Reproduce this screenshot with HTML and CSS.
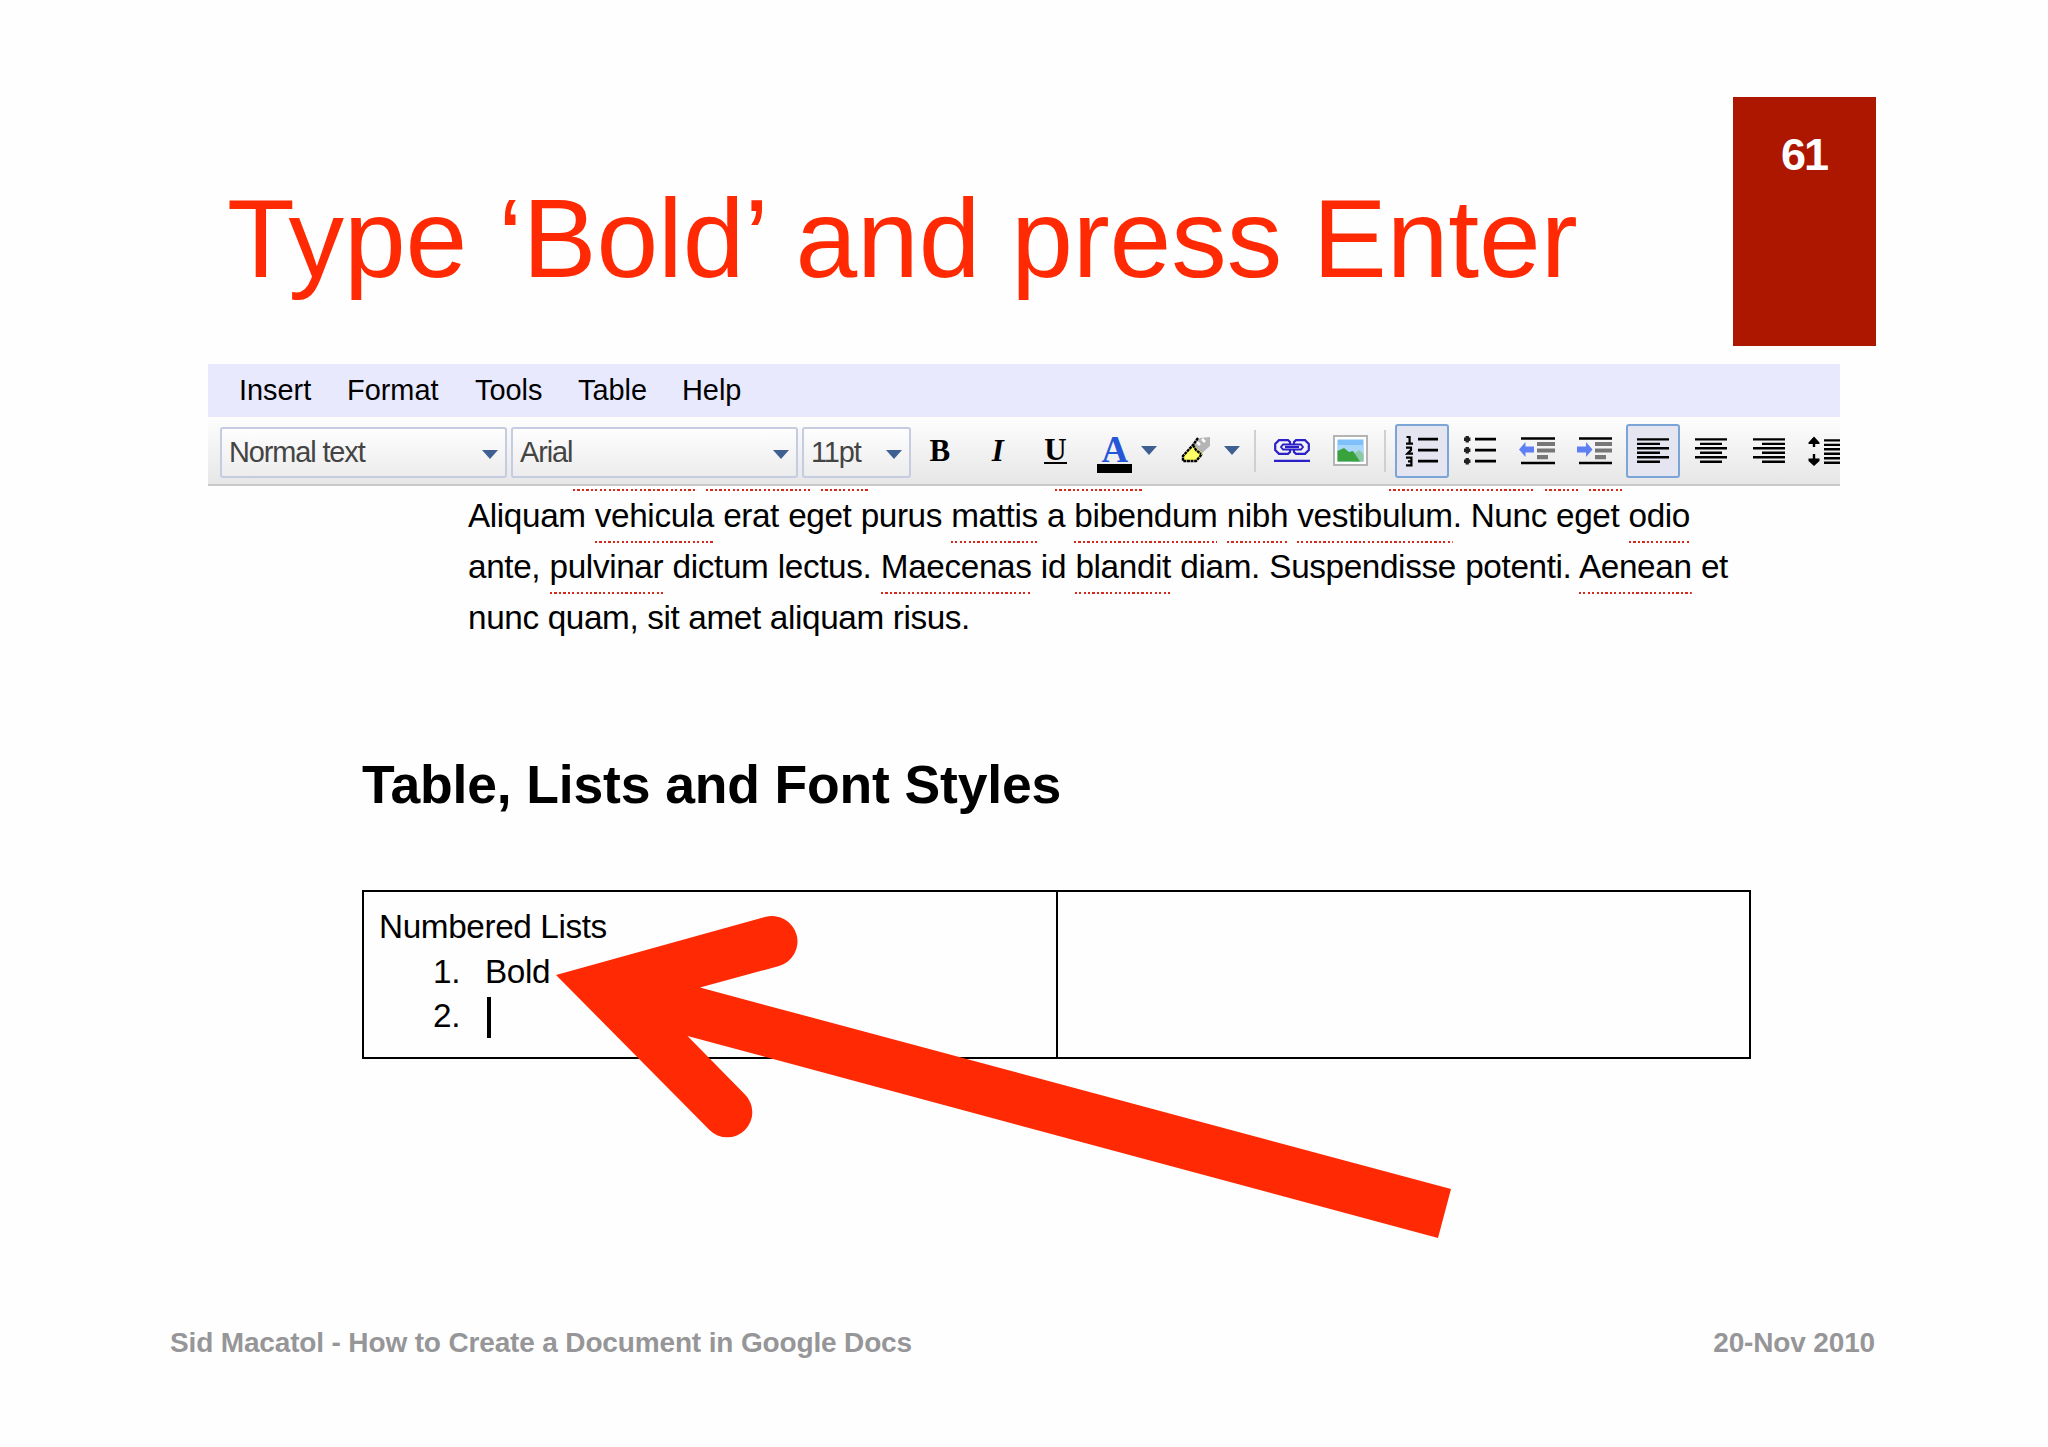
FILE: index.html
```
<!DOCTYPE html>
<html lang="en">
  <head>
    <meta charset="UTF-8" />
    <meta name="viewport" content="width=device-width, initial-scale=1.0" />
    <title>How to Create a Document in Google Docs</title>
    <link rel="stylesheet" href="styles.css">
  </head>

  <body>
    <div class="slide">
      <header class="header">
        <h1>Type ‘Bold’ and press Enter</h1>
        <div class="page-number">61</div>
      </header>

      <div class="editor">
        <nav class="menu">
          <span class="insert">Insert</span>
          <span class="format">Format</span>
          <span class="tools">Tools</span>
          <span class="table">Table</span>
          <span class="help">Help</span>
        </nav>

        <div class="toolbar">
          <div class="select"><span>Normal text</span><i class="caret"></i></div>
          <div class="select"><span>Arial</span><i class="caret"></i></div>
          <div class="select size"><span>11pt</span><i class="caret"></i></div>

          <div class="tool letter">B</div>
          <div class="tool letter italic">I</div>
          <div class="tool letter underline"><span>U</span></div>
          <div class="tool color"><span>A</span><i class="caret"></i></div>
          <div class="tool marker">
            <svg width="30" height="27" viewBox="0 0 30 27">
              <path d="M12 7 L19 1 L29 0 L29 9 L20 17 Z" fill="#b5b5b5" />
              <path d="M16 5 l3 3 M21 2 l3 3" stroke="#fff" stroke-width="2.5" />
              <path d="M2 20 L12 8 L22 17 L16 24 L3 24 Z" fill="#ffff66" />
              <path d="M17 1 L12 8 L2 19 L2 24 L15 24 L21 17 M12 8 l3 5 l5 4" fill="none" stroke="#000" stroke-width="2.4" stroke-dasharray="3 .6" />
            </svg>
            <i class="caret"></i>
          </div>
          <i class="line"></i>
          <div class="tool">
            <svg width="36" height="24" viewBox="0 0 36 24" fill="none" stroke="#2b20c8" stroke-width="2.2">
              <path d="M16 5 V3 L14 1.2 H5 L1.2 5 V11 L5 14.8 H14 L16 13 V11" />
              <path d="M20 5 V3 L22 1.2 H31 L34.8 5 V11 L31 14.8 H22 L20 13 V11" />
              <path d="M9 5.5 H27 L29 8 L27 10.5 H9 L7 8 Z M11 8 H25" stroke-width="1.8" />
              <path d="M0 21.8 H36" />
            </svg>
          </div>
          <div class="tool">
            <svg width="35" height="31" viewBox="0 0 35 31">
              <rect x="1" y="1" width="33" height="29" fill="#fff" stroke="#b4b4b4" stroke-width="2" />
              <rect x="4.5" y="4.5" width="26" height="22" fill="#7fc0fa" />
              <rect x="4.5" y="10" width="26" height="9" fill="#a9d6fb" />
              <path d="M18 26 L22 18 L26 15 L30.5 19 V26.5 H18 Z" fill="#8cc9a4" />
              <path d="M4.5 16 L11 13 L16 17 L20 16 L27 26.5 H4.5 Z" fill="#3aa23c" />
            </svg>
          </div>
          <i class="line second-line"></i>
          <div class="tool active">
            <svg width="34" height="32" viewBox="0 0 34 32">
              <path d="M13 4.2 H33 M13 15.2 H33 M13 26.2 H33" stroke="#000" stroke-width="2.8" />
              <path d="M1.5 2 H4.6 V8.6 M1 8.6 H8 M1 12.6 H6 V15 L2.4 18.6 H8 M1 22.6 H6.4 V30.4 H1 M3 26.4 H6" fill="none" stroke="#000" stroke-width="2.2" />
            </svg>
          </div>
          <div class="tool">
            <svg width="32" height="32" viewBox="0 0 32 32">
              <path d="M11 4.2 H32 M11 15.2 H32 M11 26.2 H32" stroke="#000" stroke-width="2.8" />
              <path d="M3.2 1 V7.4 M0 4.2 H6.4 M3.2 12 V18.4 M0 15.2 H6.4 M3.2 23 V29.4 M0 26.2 H6.4" stroke="#222" stroke-width="3.4" />
            </svg>
          </div>
          <div class="tool">
            <svg width="36" height="30" viewBox="0 0 36 30">
              <path d="M2 2.5 H36 M2 27 H36" stroke="#000" stroke-width="2.6" />
              <path d="M18 8 H36 M18 14.5 H36 M18 21.2 H29" stroke="#777" stroke-width="4.2" />
              <path d="M0 13.5 L6.5 6 V10.5 H15 V16.5 H6.5 V21 Z" fill="#5f7ff5" />
            </svg>
          </div>
          <div class="tool">
            <svg width="36" height="30" viewBox="0 0 36 30">
              <path d="M2 2.5 H35 M2 27 H35" stroke="#000" stroke-width="2.6" />
              <path d="M18 8 H35 M18 14.5 H35 M18 21.2 H29" stroke="#777" stroke-width="4.2" />
              <path d="M15.5 13.5 L9 6 V10.5 H0 V16.5 H9 V21 Z" fill="#5f7ff5" />
            </svg>
          </div>
          <div class="tool active">
            <svg width="32" height="28" viewBox="0 0 32 28">
              <path d="M0 2.4 H32 M0 6.9 H23 M0 11.3 H32 M0 15.8 H23 M0 20.3 H32 M0 24.8 H23" stroke="#000" stroke-width="2.4" />
            </svg>
          </div>
          <div class="tool">
            <svg width="32" height="28" viewBox="0 0 32 28">
              <path d="M0 2.4 H32 M5 6.9 H27 M0 11.3 H32 M5 15.8 H27 M0 20.3 H32 M5 24.8 H27" stroke="#000" stroke-width="2.4" />
            </svg>
          </div>
          <div class="tool">
            <svg width="32" height="28" viewBox="0 0 32 28">
              <path d="M0 2.4 H32 M9 6.9 H32 M0 11.3 H32 M9 15.8 H32 M0 20.3 H32 M9 24.8 H32" stroke="#000" stroke-width="2.4" />
            </svg>
          </div>
          <div class="tool spacing">
            <svg width="32" height="30" viewBox="0 0 32 30">
              <path d="M16 4.4 H32 M16 8.9 H32 M16 13.3 H32 M16 17.8 H32 M16 22.3 H32 M16 26.8 H32" stroke="#000" stroke-width="2.4" />
              <path d="M6 2 V11 M6 18 V28" stroke="#000" stroke-width="2.4" />
              <path d="M6 0.5 L11.5 6.5 V8 H0.5 V6.5 Z M6 30 L11.5 25 V22.5 H0.5 V25 Z" />
            </svg>
          </div>
        </div>

        <!-- squiggles of the line scrolled under the toolbar -->
        <div class="cut-line">
          <i style="width: 122px"></i>
          <i style="width: 105px; margin-left: 11px"></i>
          <i style="width: 48px; margin-left: 10px"></i>
          <i style="width: 88px; margin-left: 186px"></i>
          <i style="width: 145px; margin-left: 246px"></i>
          <i style="width: 34px; margin-left: 11px"></i>
          <i style="width: 35px; margin-left: 10px"></i>
        </div>

        <div class="text">
          <p class="first">Aliquam <u>vehicula</u> erat eget purus <u>mattis</u> a <u>bibendum</u> <u>nibh</u> <u>vestibulum</u>. Nunc eget <u>odio</u></p>
          <p class="second">ante, <u>pulvinar</u> dictum lectus. <u>Maecenas</u> id <u>blandit</u> diam. Suspendisse potenti. <u>Aenean</u> et</p>
          <p class="third">nunc quam, sit amet aliquam risus.</p>
        </div>

        <h2>Table, Lists and Font Styles</h2>

        <div class="doc-table">
          <div class="cell">
            <p>Numbered Lists</p>
            <div class="row"><span class="num">1.</span><span>Bold</span></div>
            <div class="row"><span class="num">2.</span><i class="cursor"></i></div>
          </div>
          <div class="cell"></div>
        </div>
      </div>

      <footer class="footer">
        <span>Sid Macatol - How to Create a Document in Google Docs</span>
        <span>20-Nov 2010</span>
      </footer>

      <svg class="arrow" width="900" height="330" viewBox="554 912 900 330">
        <path d="M556 975 L765 917 A25 25 0 0 1 779 966 L700 987.5 L1451 1189 L1438 1238 L687.5 1036 L745 1094.5 A25 25 0 0 1 709.5 1130 Z" fill="#ff2a04" />
      </svg>
    </div>
  </body>
</html>
```

FILE: styles.css
```
* {
  box-sizing: border-box;
}

body {
  margin: 0;
  background: #fefefe;
  font-family: "Liberation Sans", Arial, sans-serif;
}

h1,
h2,
p {
  margin: 0;
  font-weight: normal;
}

.slide {
  position: relative;
  width: 2048px;
  height: 1447px;
  overflow: hidden;
  white-space: nowrap;
}

.header {
  display: flex;
  justify-content: space-between;
  height: 364px;
  padding: 97px 172px 0 227px;
}

.header h1 {
  padding-top: 78px;
  font-size: 111px;
  line-height: 128px;
  letter-spacing: -0.1px;
  color: #ff2a04;
}

.page-number {
  width: 143px;
  height: 249px;
  padding: 32px 0 0 48px;
  background: #ad1700;
  color: #fff;
  font-size: 45px;
  font-weight: bold;
  line-height: 52px;
  letter-spacing: -2px;
}

.editor {
  width: 1632px;
  margin-left: 208px;
}

.menu {
  display: flex;
  height: 53px;
  padding-left: 31px;
  background: #e8e9fc;
  font-size: 28.9px;
  line-height: 52px;
}

.menu span {
  width: 104px;
}

.menu .insert {
  width: 108px;
}

.menu .format {
  width: 128px;
}

.menu .tools {
  width: 103px;
}

.toolbar {
  display: flex;
  align-items: center;
  height: 69px;
  padding-left: 12px;
  background: linear-gradient(#fefefe, #e6e6e6);
  border-bottom: 2px solid #c8c8c8;
  overflow: hidden;
}

.toolbar > * {
  flex-shrink: 0;
}

.select {
  display: flex;
  justify-content: space-between;
  align-items: center;
  width: 287px;
  height: 51px;
  margin: 3px 4px 0 0;
  padding: 0 7px;
  border: 2px solid #c5cbe0;
  border-radius: 3px;
  background: linear-gradient(#fefefe, #ececec);
  color: #444;
  font-size: 28.9px;
  letter-spacing: -1.1px;
}

.select.size {
  width: 109px;
  margin-right: 0;
}

.caret {
  border: 8px solid transparent;
  border-top: 9px solid #3f5f93;
  border-bottom: 0;
}

.select .caret {
  margin-top: 4px;
}

.tool {
  display: flex;
  align-items: center;
  justify-content: center;
  width: 57.8px;
  height: 54px;
}

.tool.active {
  width: 53.8px;
  margin: 0 2px;
  border: 2px solid #7aa5d6;
  border-radius: 3px;
  background: #e4e5f0;
}

.letter {
  font-family: "Liberation Serif", "Times New Roman", serif;
  font-size: 31px;
  font-weight: bold;
}

.italic {
  font-style: italic;
}

.underline span {
  border-bottom: 2px solid #000;
  line-height: 25px;
}

.color {
  width: 82px;
  gap: 9px;
  padding-left: 4px;
}

.color span {
  width: 35px;
  height: 45px;
  border-bottom: 9px solid #000;
  font: bold 37px/43px "Liberation Serif", serif;
  text-align: center;
  color: #2556d8;
}

.marker {
  width: 88px;
  gap: 13px;
}

.line {
  width: 2px;
  height: 42px;
  margin-right: 7px;
  background: #d0d0d0;
}

.second-line {
  margin-left: 5px;
}

.tool.spacing {
  justify-content: flex-start;
  padding-left: 10px;
}

.cut-line {
  display: flex;
  height: 16px;
  padding: 3px 0 0 365px;
}

.cut-line i,
.text u {
  background: repeating-linear-gradient(90deg, #d8281c 0 2.2px, transparent 2.2px 4.44px) bottom / 100% 2px no-repeat;
}

.cut-line i {
  height: 2px;
}

.text {
  margin-top: -12px;
  padding-left: 260px;
  font-size: 33.3px;
  line-height: 51px;
  letter-spacing: -0.38px;
}

.text u {
  padding-bottom: 9px;
  text-decoration: none;
}

.text p,
h2 {
  text-align-last: justify;
}

.first {
  width: 1222px;
}

.second {
  width: 1260px;
}

.third {
  width: 502px;
}

h2 {
  width: 699px;
  margin: 102px 0 0 154px;
  font-size: 53.5px;
  font-weight: bold;
  line-height: 80px;
  letter-spacing: -0.2px;
}

.doc-table {
  display: grid;
  grid-template-columns: 692px 1fr;
  width: 1389px;
  height: 169px;
  margin: 65px 0 0 154px;
  border: 2px solid #000;
  font-size: 33.3px;
  line-height: 44.5px;
  letter-spacing: -0.38px;
}

.cell {
  padding: 13px 0 0 15px;
}

.cell + .cell {
  border-left: 2px solid #000;
}

.row {
  display: flex;
}

.num {
  width: 52px;
  margin-left: 54px;
}

.cursor {
  width: 4px;
  height: 41px;
  margin: 3px 0 0 2px;
  background: #000;
}

.footer {
  display: flex;
  justify-content: space-between;
  margin-top: 264px;
  padding: 0 173px 0 170px;
  color: #969698;
  font-size: 28px;
  font-weight: bold;
  line-height: 40px;
  letter-spacing: -0.15px;
}

.arrow {
  position: absolute;
  left: 554px;
  top: 912px;
}
```
